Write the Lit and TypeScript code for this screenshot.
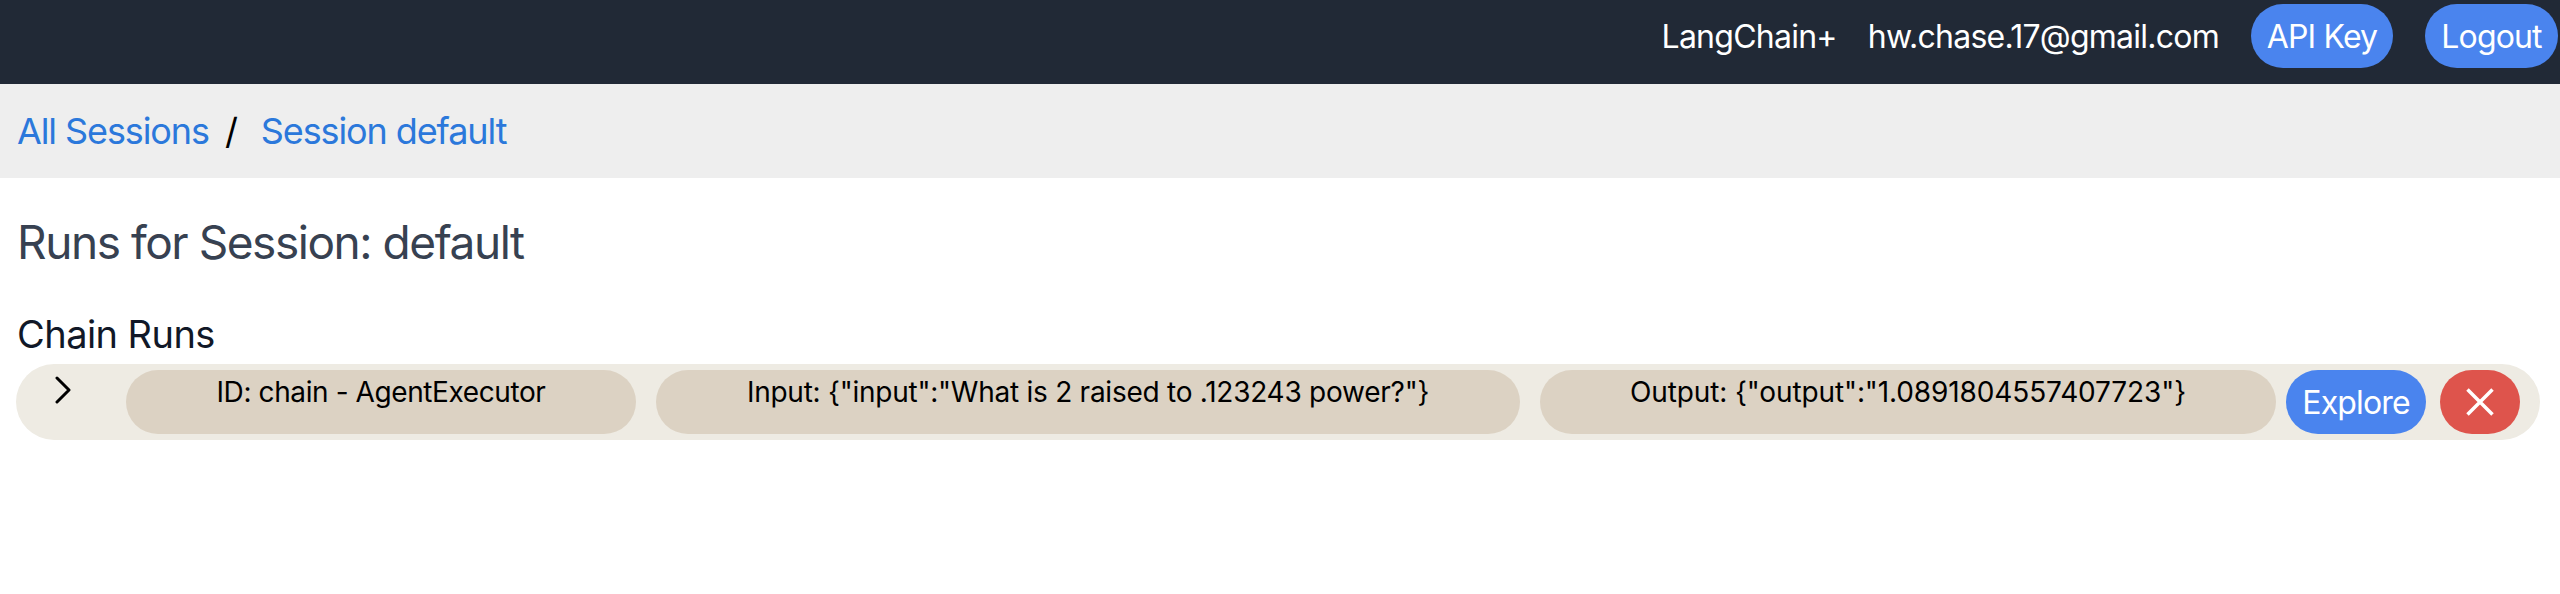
import { LitElement, html, css } from 'lit';
import { customElement } from 'lit/decorators.js';

@customElement('app-root')
export class AppRoot extends LitElement {
  static styles = css`
    :host {
      display: block;
      font-family: Inter, 'Liberation Sans', sans-serif;
      color: #000;
    }
    header {
      height: 84px;
      box-sizing: border-box;
      padding: 4px 2px 16px 0;
      background: #212936;
      display: flex;
      justify-content: flex-end;
      align-items: stretch;
      color: #fff;
      font-size: 32px;
      letter-spacing: -0.75px;
    }
    .brand, .email {
      align-self: center;
    }
    .brand { margin-right: 31px; }
    .email { margin-right: 32px; }
    .btn {
      border: 0;
      padding: 0;
      height: 64px;
      border-radius: 32px;
      background: #4a84ee;
      color: #fff;
      font: inherit;
      font-size: 32px;
      letter-spacing: -0.85px;
    }
    .api { width: 142px; margin-right: 32px; }
    .logout { width: 133px; }
    nav {
      height: 94px;
      box-sizing: border-box;
      padding-left: 17px;
      background: #eeeeee;
      display: flex;
      align-items: center;
      font-size: 36px;
      letter-spacing: -1.1px;
    }
    nav a { color: #2b78db; text-decoration: none; }
    nav span { margin: 0 24px 0 16px; }
    h1 {
      margin: 36px 0 0 17px;
      font-size: 46px;
      line-height: 56px;
      font-weight: 400;
      letter-spacing: -1.45px;
      color: #374151;
    }
    h2 {
      margin: 40px 0 0 17px;
      font-size: 38px;
      line-height: 48px;
      font-weight: 400;
      letter-spacing: -0.55px;
      color: #111827;
    }
    .row {
      margin: 6px 20px 0 16px;
      height: 76px;
      box-sizing: border-box;
      padding: 6px 20px 6px 0;
      background: #eeebe3;
      border-radius: 38px;
      display: flex;
      align-items: stretch;
    }
    .chevron {
      width: 110px;
      flex: none;
      display: flex;
      justify-content: center;
      padding: 6px 17px 0 0;
      box-sizing: border-box;
      align-items: flex-start;
    }
    .chevron svg { display: block; }
    .pill {
      background: #dcd2c3;
      border-radius: 32px;
      height: 64px;
      flex: none;
      box-sizing: border-box;
      padding-top: 4px;
      text-align: center;
      font-size: 28px;
      line-height: 36px;
      margin-right: 20px;
    }
    .id { width: 510px; letter-spacing: -0.4px; }
    .input { width: 864px; letter-spacing: -0.25px; }
    .output { width: 736px; margin-right: 10px; letter-spacing: -0.12px; }
    .explore { width: 140px; margin-right: 14px; }
    .del {
      width: 80px;
      height: 64px;
      border: 0;
      padding: 0;
      border-radius: 32px;
      background: #de544c;
      display: flex;
      align-items: center;
      justify-content: center;
    }
  `;

  render() {
    return html`
      <header>
        <div class="brand">LangChain+</div>
        <div class="email">hw.chase.17@gmail.com</div>
        <button class="btn api">API Key</button>
        <button class="btn logout">Logout</button>
      </header>
      <nav>
        <a href="#">All Sessions</a>
        <span>/</span>
        <a href="#">Session default</a>
      </nav>
      <h1>Runs for Session: default</h1>
      <h2>Chain Runs</h2>
      <div class="row">
        <div class="chevron">
          <svg width="16" height="28" viewBox="0 0 16 28" fill="none" stroke="#000" stroke-width="3" stroke-linecap="round" stroke-linejoin="round">
            <path d="M2 2l12 12L2 26" />
          </svg>
        </div>
        <div class="pill id">ID: chain - AgentExecutor</div>
        <div class="pill input">Input: {"input":"What is 2 raised to .123243 power?"}</div>
        <div class="pill output">Output: {"output":"1.0891804557407723"}</div>
        <button class="btn explore">Explore</button>
        <button class="del">
          <svg width="28" height="28" viewBox="0 0 28 28" fill="none" stroke="#fff" stroke-width="3.5">
            <path d="M1.5 1.5l25 25M26.5 1.5l-25 25" />
          </svg>
        </button>
      </div>
    `;
  }
}
